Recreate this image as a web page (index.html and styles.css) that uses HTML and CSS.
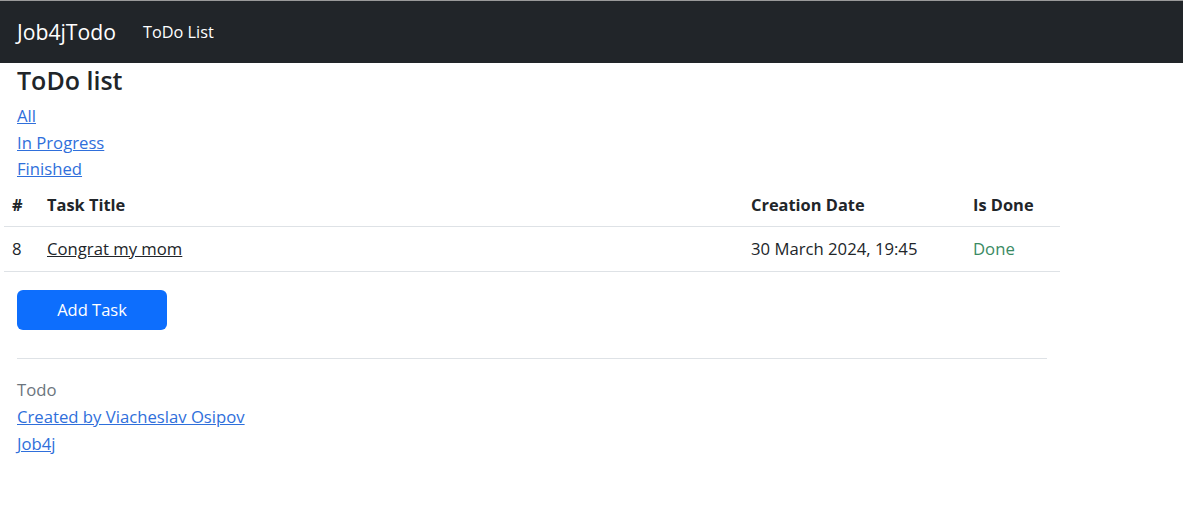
FILE: index.html
```html
<!DOCTYPE html>
<html lang="en">
<head>
<meta charset="utf-8">
<title>ToDo list</title>
<link rel="stylesheet" href="styles.css">
</head>
<body>
<nav class="navbar">
  <a class="brand" href="#">Job4jTodo</a>
  <a class="nav-link" href="#">ToDo List</a>
</nav>
<main class="page">
  <h4 class="title">ToDo list</h4>
  <div class="filters">
    <a href="#">All</a>
    <a href="#">In Progress</a>
    <a href="#">Finished</a>
  </div>
  <table class="tasks">
    <thead>
      <tr>
        <th class="c-id">#</th>
        <th class="c-title">Task Title</th>
        <th class="c-date">Creation Date</th>
        <th class="c-done">Is Done</th>
      </tr>
    </thead>
    <tbody>
      <tr>
        <td>8</td>
        <td><a class="task-link" href="#">Congrat my mom</a></td>
        <td>30 March 2024, 19:45</td>
        <td class="done">Done</td>
      </tr>
    </tbody>
  </table>
  <div class="actions">
    <a class="btn" href="#">Add Task</a>
  </div>
  <hr class="divider">
  <footer class="footer">
    <span class="muted">Todo</span>
    <a href="#">Created by Viacheslav Osipov</a>
    <a href="#">Job4j</a>
  </footer>
</main>
</body>
</html>
```

FILE: styles.css
```css
* { box-sizing: border-box; }
html, body { margin: 0; padding: 0; }
body {
  font-family: "Open Sans", "Noto Sans", sans-serif;
  font-size: 16.7px;
  color: #212529;
  background: #fff;
}
a { color: #2f6fdb; }

.navbar {
  display: flex;
  align-items: center;
  height: 63px;
  background: #212529;
  border-top: 1px solid #9a9a9a;
  padding: 0 17px;
  gap: 27px;
}
.brand {
  color: #fff;
  text-decoration: none;
  font-size: 21.2px;
  line-height: 30px;
}
.nav-link {
  color: #fff;
  text-decoration: none;
  font-size: 16.3px;
  line-height: 24px;
}

.page { padding: 0 0 0 4px; }

.title {
  margin: 2px 0 0 13px;
  font-size: 25px;
  font-weight: 600;
  line-height: 30px;
}
.filters {
  display: flex;
  flex-direction: column;
  align-items: flex-start;
  margin: 8px 0 0 13px;
}
.filters a { line-height: 26.5px; }

.tasks {
  width: 1056px;
  border-collapse: collapse;
}
.tasks th, .tasks td {
  padding: 10px 8px 9px;
  line-height: 24px;
  text-align: left;
  border-bottom: 1px solid #dee2e6;
}
.tasks td { padding-bottom: 10px; }
.tasks th { font-weight: 700; font-size: 16.4px; }
.c-id { width: 35px; }
.c-title { width: 704px; }
.c-date { width: 222px; }
.task-link { color: #212529; }
.done { color: #3a8a63; }

.actions { margin: 18px 0 0 13px; }
.btn {
  display: inline-flex;
  align-items: center;
  justify-content: center;
  width: 150px;
  height: 40px;
  background: #0d6efd;
  color: #fff;
  border-radius: 6px;
  text-decoration: none;
  font-size: 16.5px;
}

.divider {
  margin: 28px 0 0 13px;
  width: 1030px;
  border: 0;
  border-top: 1px solid #dee2e6;
}
.footer {
  display: flex;
  flex-direction: column;
  align-items: flex-start;
  margin: 17px 0 0 13px;
}
.footer > * { line-height: 27px; }
.muted { color: #6c757d; }
```
